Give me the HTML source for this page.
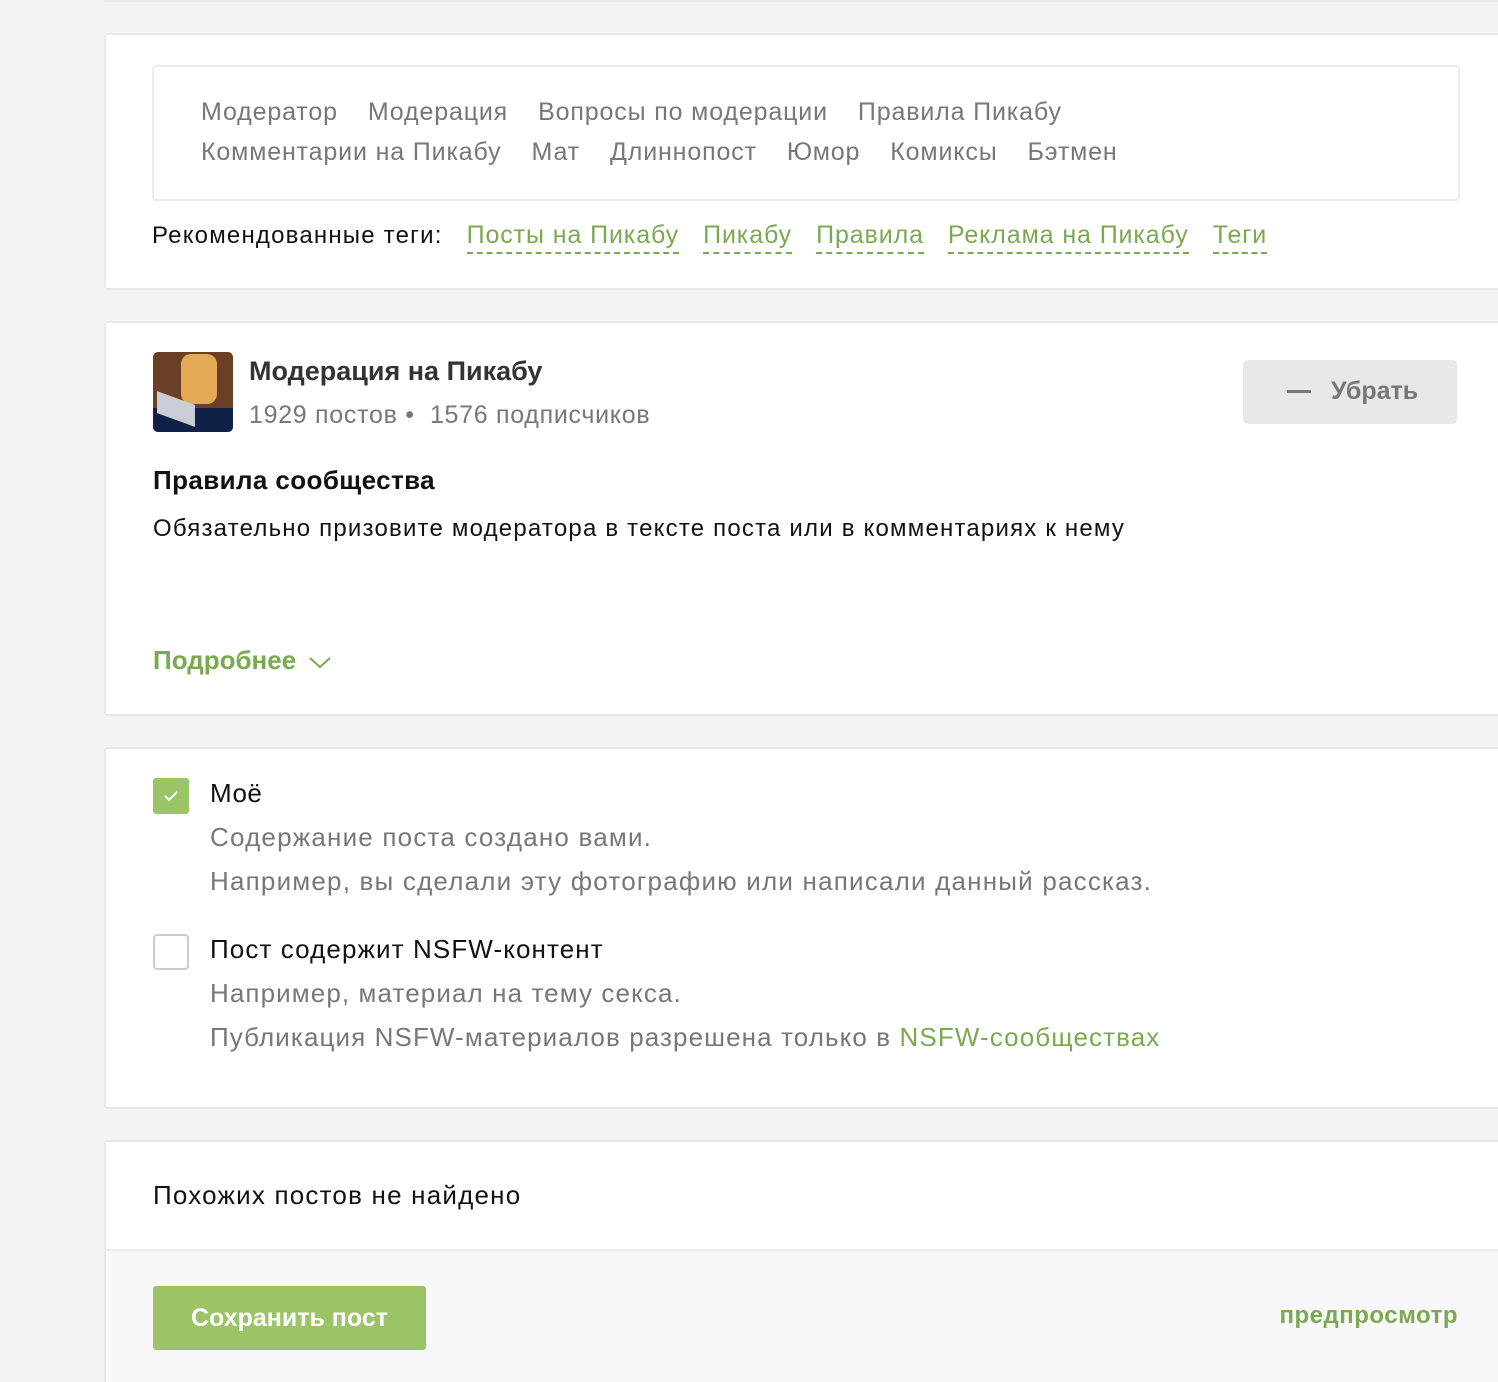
<!DOCTYPE html>
<html><head><meta charset="utf-8"><style>
*{margin:0;padding:0;box-sizing:border-box}
html,body{width:1498px;height:1382px;overflow:hidden}
body{background:#f3f3f3;font-family:"Liberation Sans","DejaVu Sans",sans-serif;position:relative;color:#111}
.card{position:absolute;left:104px;right:0;background:#fff;border:2px solid #e8e8e8;border-right:none;border-radius:4px 0 0 4px}
.a{position:absolute;white-space:nowrap}
.g{color:#7aa94f}
.tag{color:#777;margin-right:30px}
.rt{color:#7aa94f;font-size:25px;border-bottom:2px dashed #7aa94f;padding-bottom:3px;margin-left:24px;letter-spacing:0.9px}
.gray{color:#777}
</style></head><body>
<div class="a" style="left:104px;right:0;top:0;height:2px;background:#e8e8e8"></div>

<div class="card" style="top:33px;height:257px">
  <div class="a" style="left:46px;top:30px;width:1308px;height:136px;border:2px solid #ececec;border-radius:4px"></div>
  <div class="a" style="left:95px;top:57px;line-height:40px;font-size:25px;letter-spacing:0.85px">
    <span class="tag">Модератор</span><span class="tag">Модерация</span><span class="tag">Вопросы по модерации</span><span class="tag">Правила Пикабу</span><br>
    <span class="tag">Комментарии на Пикабу</span><span class="tag">Мат</span><span class="tag">Длиннопост</span><span class="tag">Юмор</span><span class="tag">Комиксы</span><span class="tag">Бэтмен</span>
  </div>
  <div class="a" style="left:46px;top:186px;font-size:24px;color:#111"><span style="letter-spacing:1.2px">Рекомендованные теги:</span><span class="rt">Посты на Пикабу</span><span class="rt">Пикабу</span><span class="rt">Правила</span><span class="rt">Реклама на Пикабу</span><span class="rt">Теги</span></div>
</div>

<div class="card" style="top:321px;height:395px">
  <div class="a" style="left:47px;top:29px;width:80px;height:80px;border-radius:5px;overflow:hidden;background:#6b3f25">
    <div class="a" style="left:0;top:56px;width:80px;height:24px;background:#0f2246"></div>
    <div class="a" style="left:28px;top:2px;width:36px;height:50px;background:#e3a955;border-radius:10px"></div>
    <div class="a" style="left:4px;top:46px;width:38px;height:22px;background:#c8cdd6;transform:skewY(20deg)"></div>
  </div>
  <div class="a" style="left:143px;top:33px;font-size:27px;font-weight:bold;color:#333">Модерация на Пикабу</div>
  <div class="a gray" style="left:143px;top:78px;font-size:25px;letter-spacing:0.7px">1929 постов •&nbsp; 1576 подписчиков</div>
  <div class="a" style="left:1137px;top:37px;width:214px;height:64px;background:#e8e8e8;border-radius:5px">
    <div class="a" style="left:44px;top:30px;width:24px;height:3px;background:#777"></div>
    <div class="a" style="left:88px;top:17px;font-size:25px;font-weight:bold;color:#777">Убрать</div>
  </div>
  <div class="a" style="left:47px;top:142px;font-size:26px;font-weight:bold;letter-spacing:0.4px">Правила сообщества</div>
  <div class="a" style="left:47px;top:192px;font-size:24px;letter-spacing:1.2px">Обязательно призовите модератора в тексте поста или в комментариях к нему</div>
  <div class="a g" style="left:47px;top:322px;font-size:26px;font-weight:bold">Подробнее</div>
  <svg class="a" style="left:202px;top:332px" width="24" height="16" viewBox="0 0 24 16"><path d="M2 3l10 9 10-9" fill="none" stroke="#7aa94f" stroke-width="2"/></svg>
</div>

<div class="card" style="top:747px;height:362px">
  <div class="a" style="left:47px;top:29px;width:36px;height:36px;background:#9bc466;border-radius:3px">
    <svg width="36" height="36"><path d="M12 18l4 4 8-8" fill="none" stroke="#fff" stroke-width="2"/></svg>
  </div>
  <div class="a" style="left:104px;top:29px;font-size:26px;letter-spacing:0.5px">Моё</div>
  <div class="a gray" style="left:104px;top:66px;font-size:26px;line-height:44px;letter-spacing:1.2px">Содержание поста создано вами.<br>Например, вы сделали эту фотографию или написали данный рассказ.</div>
  <div class="a" style="left:47px;top:185px;width:36px;height:36px;border:2px solid #ccc;border-radius:4px"></div>
  <div class="a" style="left:104px;top:185px;font-size:26px;letter-spacing:1.1px">Пост содержит NSFW-контент</div>
  <div class="a gray" style="left:104px;top:222px;font-size:26px;line-height:44px;letter-spacing:1.1px">Например, материал на тему секса.<br>Публикация NSFW-материалов разрешена только в <span class="g">NSFW-сообществах</span></div>
</div>

<div class="card" style="top:1140px;height:300px;background:#f8f8fa">
  <div class="a" style="left:0;right:0;top:0;height:109px;background:#fff;border-bottom:2px solid #ececec"></div>
  <div class="a" style="left:47px;top:38px;font-size:26px;letter-spacing:1.2px">Похожих постов не найдено</div>
  <div class="a" style="left:47px;top:144px;width:273px;height:64px;background:#9bc466;border-radius:3px;color:#fff;font-size:25px;font-weight:bold;text-align:center;line-height:64px">Сохранить пост</div>
  <div class="a g" style="right:40px;top:160px;font-size:24px;font-weight:bold;letter-spacing:0.5px">предпросмотр</div>
</div>
</body></html>
